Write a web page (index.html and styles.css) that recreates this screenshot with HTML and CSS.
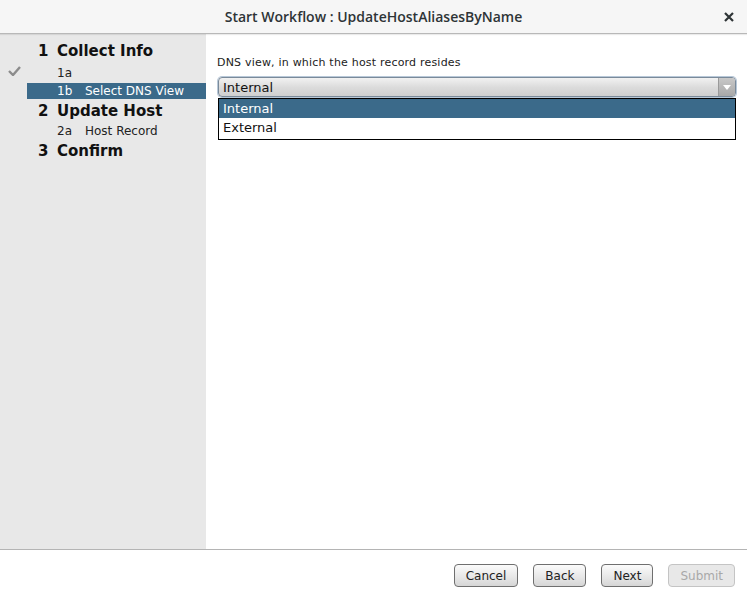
FILE: index.html
```html
<!DOCTYPE html>
<html lang="en">
<head>
<meta charset="UTF-8" />
<title>Start Workflow : UpdateHostAliasesByName</title>
<link rel="stylesheet" href="styles.css">
</head>
<body>
  <div class="dialog">
    <div class="titlebar">
      <span class="title">Start Workflow : UpdateHostAliasesByName</span>
      <svg class="close" width="10" height="10" viewBox="0 0 10 10" aria-label="Close">
        <path d="M1 1 L9 9 M9 1 L1 9" stroke="#2e3436" stroke-width="2.2" fill="none"/>
      </svg>
    </div>
    <div class="main">
      <ul class="steps">
        <li class="step"><span class="num">1</span>Collect Info</li>
        <li class="sub done">
          <svg class="check" width="13" height="10" viewBox="0 0 13 10">
            <path d="M1 5 L5 9 L12 1" stroke="#8c8c8c" stroke-width="2.4" fill="none"/>
          </svg>
          <span class="num">1a</span>
        </li>
        <li class="sub active"><span class="num">1b</span>Select DNS View</li>
        <li class="step"><span class="num">2</span>Update Host</li>
        <li class="sub"><span class="num">2a</span>Host Record</li>
        <li class="step"><span class="num">3</span>Confirm</li>
      </ul>
      <div class="content">
        <div class="label">DNS view, in which the host record resides</div>
        <div class="combo">
          <div class="combo-box">
            <span class="combo-value">Internal</span>
            <span class="combo-arrow"></span>
          </div>
          <ul class="combo-list">
            <li class="selected">Internal</li>
            <li>External</li>
          </ul>
        </div>
      </div>
    </div>
    <div class="footer">
      <button type="button">Cancel</button>
      <button type="button">Back</button>
      <button type="button">Next</button>
      <button type="button" disabled>Submit</button>
    </div>
  </div>
</body>
</html>
```

FILE: styles.css
```css
:root {
  --select-bg: #3b6a8a;
  --side-bg: #e8e8e8;
  --ui-font: "DejaVu Sans", sans-serif;
}

* {
  box-sizing: border-box;
}

body {
  margin: 0;
  font-family: var(--ui-font);
  color: #1a1a1a;
  background: #ffffff;
}

.dialog {
  width: 747px;
  height: 598px;
  display: flex;
  flex-direction: column;
}

.titlebar {
  height: 34px;
  background: #f6f6f6;
  border-bottom: 1px solid #b8b8b8;
  display: flex;
  align-items: center;
  justify-content: center;
  position: relative;
  box-shadow: 0 1px 1px rgba(0,0,0,0.08);
}

.title {
  font-family: "Open Sans", sans-serif;
  font-size: 14px;
  font-weight: 600;
  color: #2e3436;
}

.close {
  position: absolute;
  right: 13px;
  top: 12px;
}

.main {
  flex: 1;
  display: flex;
  border-bottom: 1px solid #b4b4b4;
}

.steps {
  list-style: none;
  margin: 0;
  padding: 7px 0 0 0;
  width: 206px;
  background: var(--side-bg);
}

.steps li {
  display: flex;
  align-items: center;
  white-space: nowrap;
}

.step {
  height: 20px;
  padding-left: 38px;
  font-size: 15px;
  font-weight: bold;
  color: #111;
}

.step .num {
  width: 19px;
}

.sub {
  height: 20px;
  padding-left: 57px;
  font-size: 12px;
  color: #222;
  position: relative;
}

.sub .num {
  width: 28px;
}

.sub.done {
  height: 22px;
  padding-top: 2px;
}

.sub.active {
  height: 16px;
  margin: 0 0 2px 27px;
  padding-left: 30px;
  background: var(--select-bg);
  color: #ffffff;
}

.check {
  position: absolute;
  left: 8px;
  top: 5px;
}

.content {
  flex: 1;
  padding: 22px 11px 0 11px;
}

.label {
  font-size: 11px;
  letter-spacing: 0.2px;
  color: #222;
  margin-bottom: 8px;
}

.combo {
  margin-left: 1px;
}

.combo-box {
  height: 20px;
  border: 1px solid #7a8a9a;
  border-radius: 4px;
  background: linear-gradient(#f2f2f2, #dcdcdc 50%, #cfcfcf);
  display: flex;
  align-items: center;
  box-shadow: 0 0 0 1px #b8c8d8;
}

.combo-value {
  flex: 1;
  padding-left: 4px;
  font-size: 13px;
  color: #111;
}

.combo-arrow {
  width: 17px;
  height: 18px;
  background: linear-gradient(#c8c8c8, #a8a8a8);
  border-left: 1px solid #9a9a9a;
  border-radius: 0 3px 3px 0;
  display: flex;
  align-items: center;
  justify-content: center;
}

.combo-arrow::after {
  content: "";
  border-left: 4px solid transparent;
  border-right: 4px solid transparent;
  border-top: 5px solid #ffffff;
}

.combo-list {
  list-style: none;
  margin: 1px 0 0 0;
  padding: 0;
  border: 1px solid #000;
  height: 42px;
}

.combo-list li {
  height: 19px;
  padding-left: 4px;
  font-size: 13px;
  line-height: 19px;
  color: #111;
}

.combo-list li.selected {
  background: var(--select-bg);
  color: #ffffff;
}

.footer {
  height: 48px;
  display: flex;
  justify-content: flex-end;
  align-items: center;
  gap: 15px;
  padding: 3px 12px 0 0;
}

button {
  height: 23px;
  padding: 0 11px;
  font-family: var(--ui-font);
  font-size: 12px;
  color: #222;
  border: 1px solid #6f6f6f;
  border-radius: 4px;
  background: linear-gradient(#fbfbfb, #e6e6e6 60%, #d6d6d6);
}

button:disabled {
  color: #a8a8a8;
  border-color: #c4c4c4;
  background: #e8e8e8;
}
```
